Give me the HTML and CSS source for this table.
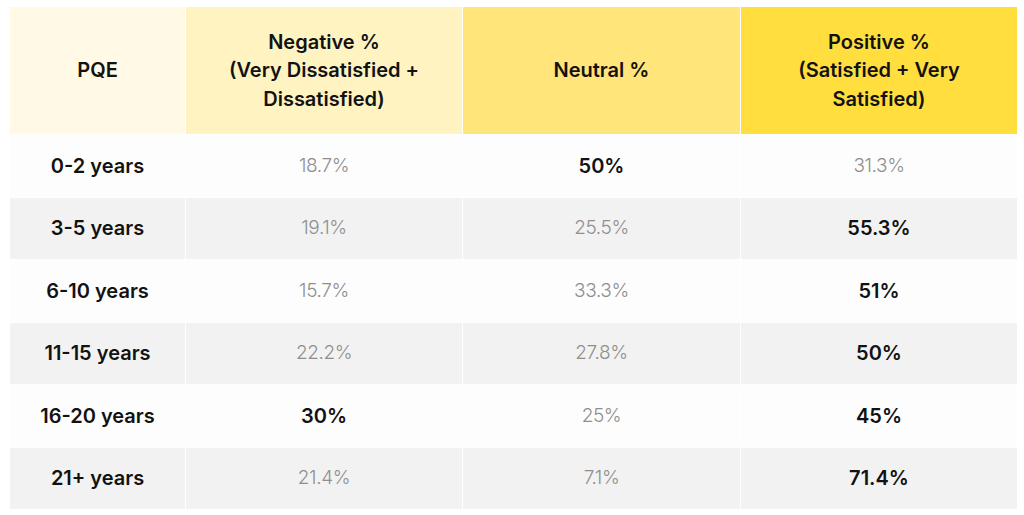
FILE: index.html
```html
<!DOCTYPE html>
<html lang="en">
<head>
<meta charset="utf-8">
<title>PQE satisfaction</title>
<link rel="stylesheet" href="styles.css">
</head>
<body>
<table class="pqe-table">
  <colgroup>
    <col class="c-pqe">
    <col class="c-neg">
    <col class="c-neu">
    <col class="c-pos">
  </colgroup>
  <thead>
    <tr>
      <th class="h-pqe">PQE</th>
      <th class="h-neg">Negative %<br>(Very Dissatisfied +<br>Dissatisfied)</th>
      <th class="h-neu">Neutral %</th>
      <th class="h-pos">Positive %<br>(Satisfied + Very<br>Satisfied)</th>
    </tr>
  </thead>
  <tbody>
    <tr><td class="label">0-2 years</td><td class="muted">18.7%</td><td class="strong">50%</td><td class="muted">31.3%</td></tr>
    <tr><td class="label">3-5 years</td><td class="muted">19.1%</td><td class="muted">25.5%</td><td class="strong">55.3%</td></tr>
    <tr><td class="label">6-10 years</td><td class="muted">15.7%</td><td class="muted">33.3%</td><td class="strong">51%</td></tr>
    <tr><td class="label">11-15 years</td><td class="muted">22.2%</td><td class="muted">27.8%</td><td class="strong">50%</td></tr>
    <tr><td class="label">16-20 years</td><td class="strong">30%</td><td class="muted">25%</td><td class="strong">45%</td></tr>
    <tr><td class="label">21+ years</td><td class="muted">21.4%</td><td class="muted">7.1%</td><td class="strong">71.4%</td></tr>
  </tbody>
</table>
</body>
</html>
```
FILE: styles.css
```css
html, body {
  margin: 0;
  padding: 0;
  background: #ffffff;
}
body {
  padding: 6px 8px 0 9px;
  font-family: Inter, "Noto Sans", sans-serif;
}
.pqe-table {
  width: 1008px;
  border-collapse: collapse;
  table-layout: fixed;
}
.c-pqe { width: 176px; }
.c-neg { width: 277px; }
.c-neu { width: 278px; }
.c-pos { width: 277px; }

.pqe-table th,
.pqe-table td {
  border: 1px solid #ffffff;
  text-align: center;
  vertical-align: middle;
  padding: 0 6px;
  font-size: 20px;
  color: #121212;
}
.pqe-table th {
  height: 127px;
  font-weight: 600;
  line-height: 28.5px;
}
.h-pqe { background: #fff9e6; }
.h-neg { background: #fff3c2; }
.h-neu { background: #ffe57a; }
.h-pos { background: #ffde3e; }

.pqe-table td {
  height: 61.5px;
  line-height: 24px;
}
.pqe-table tbody tr:nth-child(odd) td { background: #fdfdfd; }
.pqe-table tbody tr:nth-child(even) td { background: #f2f2f2; }

.pqe-table .label,
.pqe-table .strong { font-weight: 600; color: #121212; }
.pqe-table .muted {
  color: #8f8f8f;
  font-weight: 300;
  font-size: 19px;
  letter-spacing: -0.4px;
}
```
